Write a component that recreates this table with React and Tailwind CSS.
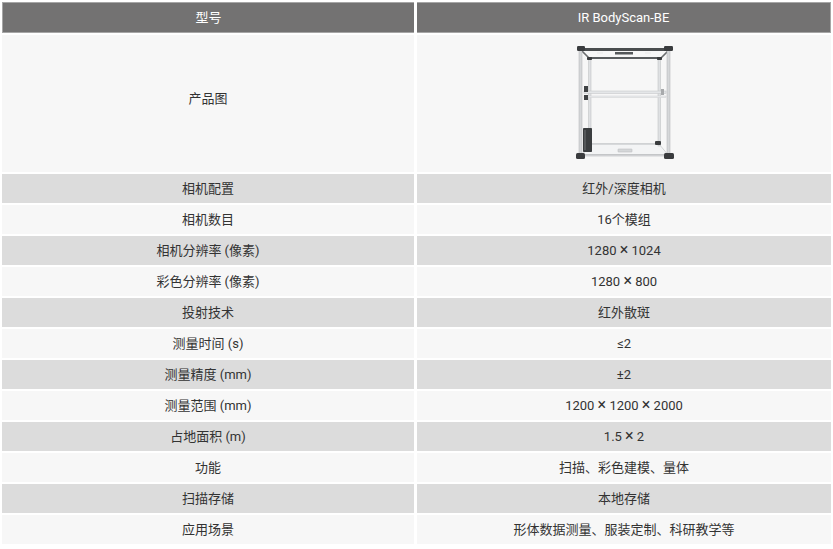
import React from 'react';

const rows = [
  ['相机配置', '红外/深度相机'],
  ['相机数目', '16个模组'],
  ['相机分辨率 (像素)', '1280 × 1024'],
  ['彩色分辨率 (像素)', '1280 × 800'],
  ['投射技术', '红外散斑'],
  ['测量时间 (s)', '≤2'],
  ['测量精度 (mm)', '±2'],
  ['测量范围 (mm)', '1200 × 1200 × 2000'],
  ['占地面积 (m)', '1.5 × 2'],
  ['功能', '扫描、彩色建模、量体'],
  ['扫描存储', '本地存储'],
  ['应用场景', '形体数据测量、服装定制、科研教学等'],
];

// the source renders the multiplication sign larger than the digits
function Cell({ text }) {
  const parts = text.split(/(×)/);
  return (
    <span>
      {parts.map((p, i) =>
        p === '×' ? (
          <span key={i} className="text-[16px] leading-none">×</span>
        ) : (
          <React.Fragment key={i}>{p}</React.Fragment>
        )
      )}
    </span>
  );
}

function Scanner() {
  return (
    <svg width="100" height="120" viewBox="0 0 100 120">
      {/* base platform */}
      <polygon points="6,112 94,112 84,100 16,100" fill="#f3f4f5" stroke="#c9cbcd" strokeWidth="0.8" />
      <rect x="43" y="105" width="14" height="3" rx="0.5" fill="#d5d7d9" stroke="#b5b7b9" strokeWidth="0.5" />
      {/* back posts */}
      <rect x="13.5" y="15" width="2.5" height="87" fill="#dfe1e3" stroke="#b9bbbd" strokeWidth="0.5" />
      <rect x="83" y="15" width="2.5" height="87" fill="#dfe1e3" stroke="#b9bbbd" strokeWidth="0.5" />
      <rect x="15" y="99" width="70" height="1.6" fill="#d0d2d4" />
      {/* middle bars */}
      <rect x="9" y="47" width="82" height="2.6" fill="#e4e6e8" stroke="#bfc1c3" strokeWidth="0.5" />
      <rect x="9" y="52" width="82" height="1.6" fill="#e9ebed" stroke="#c7c9cb" strokeWidth="0.4" />
      <rect x="9" y="42" width="4" height="6" fill="#3f4244" />
      <rect x="9" y="51" width="4" height="5" fill="#3f4244" />
      <rect x="86" y="45" width="3" height="6" fill="#a8aaac" />
      {/* top frame */}
      <polygon points="5,5 95,5 86,14 14,14" fill="none" stroke="#6b6e70" strokeWidth="1.6" />
      <rect x="6" y="4" width="88" height="3" fill="#4a4d4f" />
      <rect x="13" y="13" width="74" height="2" fill="#5a5d5f" />
      <rect x="22" y="8" width="6" height="2" fill="#f0f0f0" />
      <rect x="40" y="8" width="18" height="2.5" fill="#55585a" />
      <rect x="70" y="8" width="6" height="2" fill="#f0f0f0" />
      {/* front posts */}
      <rect x="4" y="5" width="3" height="108" fill="#d6d8da" stroke="#aeb0b2" strokeWidth="0.5" />
      <rect x="92" y="5" width="3" height="108" fill="#d6d8da" stroke="#aeb0b2" strokeWidth="0.5" />
      {/* control box */}
      <rect x="8" y="84" width="9" height="24" rx="0.8" fill="#3b3e40" />
      <rect x="9" y="86" width="2" height="20" fill="#55585a" />
      {/* connectors */}
      <rect x="2" y="2" width="8" height="5" rx="1.2" fill="#3a3c3e" />
      <rect x="89" y="2" width="9" height="5" rx="1.2" fill="#3a3c3e" />
      <rect x="12" y="13" width="5" height="3" rx="0.8" fill="#3a3c3e" />
      <rect x="82" y="13" width="5" height="3" rx="0.8" fill="#3a3c3e" />
      <rect x="80" y="97" width="6" height="4" rx="1" fill="#3a3c3e" />
      <rect x="1" y="109" width="9" height="6" rx="1.5" fill="#3a3c3e" />
      <rect x="89" y="109" width="10" height="6" rx="1.5" fill="#3a3c3e" />
      <rect x="10" y="110" width="79" height="1.6" fill="#c4c6c8" />
    </svg>
  );
}

export default function App() {
  return (
    <div
      className="w-[833px] h-[549px] bg-white p-[2px] text-[13px] text-[#333]"
      style={{ fontFamily: 'Roboto, "Noto Sans CJK SC", sans-serif' }}
    >
      <div className="grid grid-cols-[412px_1fr] gap-x-[3px] gap-y-[2px]">
        <div className="h-[31px] bg-[#737272] border border-[#a6a6a6] border-r-0 flex items-center justify-center text-white">型号</div>
        <div className="h-[31px] bg-[#737272] border border-[#a6a6a6] border-l-0 flex items-center justify-center text-white">IR BodyScan-BE</div>

        <div className="h-[137px] bg-[#f7f7f7] flex items-center justify-center pb-[10px]">产品图</div>
        <div className="h-[137px] bg-[#f7f7f7] flex items-center justify-center pl-[2px]">
          <Scanner />
        </div>

        {rows.map(([k, v], i) => {
          const bg = i % 2 === 0 ? 'bg-[#dcdcdc]' : 'bg-[#f7f7f7]';
          return (
            <React.Fragment key={k}>
              <div className={`h-[29px] ${bg} flex items-center justify-center`}>{k}</div>
              <div className={`h-[29px] ${bg} flex items-center justify-center`}>
                <Cell text={v} />
              </div>
            </React.Fragment>
          );
        })}
      </div>
    </div>
  );
}
